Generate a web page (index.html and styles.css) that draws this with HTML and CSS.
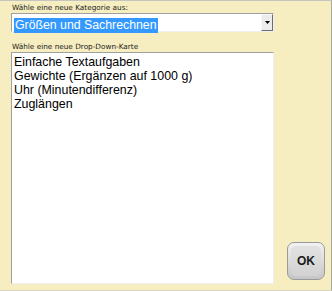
FILE: index.html
```html
<!DOCTYPE html>
<html>
<head>
<meta charset="utf-8">
<link rel="stylesheet" href="styles.css">
</head>
<body>
<div class="frame">
  <div class="label first">Wähle eine neue Kategorie aus:</div>
  <div class="select">
    <div class="select-value"><span class="hl">Größen und Sachrechnen</span></div>
    <div class="select-btn"><svg width="5" height="3" viewBox="0 0 5 3"><path d="M0 0h5L2.5 3z" fill="#000"/></svg></div>
  </div>
  <div class="label second">Wähle eine neue Drop-Down-Karte</div>
  <div class="bottom">
    <div class="listbox">
      <div class="item">Einfache Textaufgaben</div>
      <div class="item">Gewichte (Ergänzen auf 1000 g)</div>
      <div class="item">Uhr (Minutendifferenz)</div>
      <div class="item">Zuglängen</div>
    </div>
    <div class="ok"><div class="ok-inner">OK</div></div>
  </div>
</div>
</body>
</html>
```
FILE: styles.css
```css
html, body { margin: 0; padding: 0; }
body { width: 332px; height: 291px; overflow: hidden; font-family: "Liberation Sans", Arial, sans-serif; }
.frame {
  box-sizing: border-box;
  width: 332px; height: 291px;
  background: #f6eec0;
  border-top: 1px solid #c4c4c0;
  border-right: 1px solid #a8a8a4;
  border-bottom: 1px solid #d8d4c0;
  padding-left: 11px;
  display: flex; flex-direction: column;
}
.label { font-family: "DejaVu Sans", sans-serif; font-size: 7.3px; color: #222; line-height: 9px; padding-left: 1px; }
.label.first { margin-top: 2px; }
.label.second { margin-top: 10px; }
.select {
  margin-top: 1px;
  box-sizing: border-box;
  width: 263px; height: 19px;
  background: #fff;
  border-top: 1px solid #a0a0a0; border-left: 1px solid #a0a0a0;
  border-right: 1px solid #f0f0f0; border-bottom: 1px solid #f0f0f0;
  display: flex;
}
.select-value { flex: 1; padding: 1px 0 0 2px; }
.hl { display: inline-block; background: #3399ff; color: #fff; font-size: 12.3px; line-height: 15px; padding: 0 1px; }
.select-btn {
  box-sizing: border-box; width: 12px; height: 17px;
  background: #ececec;
  border-top: 1px solid #f8f8f8; border-left: 1px solid #f8f8f8;
  border-right: 1px solid #6e6e6e; border-bottom: 1px solid #6e6e6e;
  display: flex; align-items: center; justify-content: center;
}
.bottom { display: flex; align-items: flex-end; margin-top: 1px; }
.listbox {
  box-sizing: border-box;
  width: 263px; height: 232px;
  background: #fff;
  border-top: 1px solid #a0a0a0; border-left: 1px solid #a0a0a0;
  border-right: 1px solid #eeeeee; border-bottom: 1px solid #eeeeee;
  padding: 2px 0 0 2px;
}
.item { font-size: 12.4px; line-height: 14px; color: #000; }
.ok {
  box-sizing: border-box;
  width: 38px; height: 38px;
  margin: 0 0 4px 13px;
  border-radius: 7px;
  border: 1px solid #9a9a9a;
  background: linear-gradient(#f2f2f2, #c6c6c6);
  padding: 3px;
}
.ok-inner {
  box-sizing: border-box;
  width: 100%; height: 100%;
  border-radius: 5px;
  background: linear-gradient(#e2e2e2, #d2d2d2);
  display: flex; align-items: center; justify-content: center;
  font-weight: bold; font-size: 12px; color: #1a1a1a;
}
```
